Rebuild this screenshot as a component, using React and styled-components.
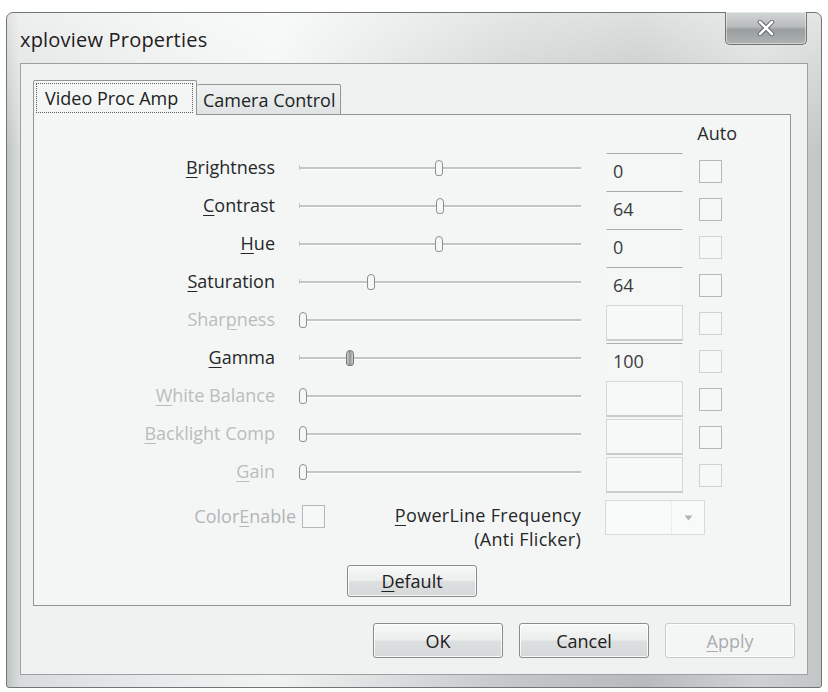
import React from 'react';
import styled, { createGlobalStyle } from 'styled-components';

const GlobalStyle = createGlobalStyle`
  html, body {
    margin: 0;
    padding: 0;
    background: #ffffff;
  }
  body {
    font-family: "Open Sans", "Noto Sans", sans-serif;
    color: #262828;
  }
`;

const Screen = styled.div`
  width: 828px;
  height: 692px;
  padding: 12px 6px 4px 6px;
  box-sizing: border-box;
`;

const Window = styled.div`
  width: 816px;
  height: 676px;
  box-sizing: border-box;
  border: 1px solid #707575;
  border-radius: 7px 7px 3px 3px;
  padding: 0 13px 12px 13px;
  display: flex;
  flex-direction: column;
  background:
    linear-gradient(to bottom, rgba(255, 255, 255, 0.55) 0, rgba(255, 255, 255, 0) 140px),
    linear-gradient(90deg, #bfc3c3 0, #d9dcdc 1.5%, #e9ecec 20%, #f1f3f3 33%, #c4c8c8 62%, #b7bbbb 78%, #cfd2d2 92%, #c2c6c6 100%);
`;

const TitleBar = styled.div`
  height: 50px;
  display: flex;
  align-items: flex-start;
  justify-content: space-between;
`;

const Title = styled.div`
  font-size: 20px;
  color: #1e2020;
  margin-top: 13px;
  letter-spacing: 0.2px;
`;

const CloseButton = styled.div`
  width: 82px;
  height: 33px;
  margin-top: -1px;
  margin-right: 1px;
  box-sizing: border-box;
  border: 1px solid #6f7575;
  border-top: none;
  border-radius: 0 0 5px 5px;
  background: linear-gradient(to bottom, #d3d6d6 0, #b9bdbd 45%, #999e9e 55%, #aeb2b2 100%);
  box-shadow: inset 0 0 0 1px rgba(255, 255, 255, 0.45);
  display: flex;
  align-items: center;
  justify-content: center;
`;

const Client = styled.div`
  flex: 1;
  background: #eef2f1;
  border: 1px solid #9ba1a1;
  padding: 16px 15px 0 12px;
  display: flex;
  flex-direction: column;
`;

const Tabs = styled.div`
  display: flex;
  align-items: flex-end;
  height: 35px;
  margin-bottom: -1px;
  position: relative;
  z-index: 1;
`;

const Tab = styled.div`
  box-sizing: border-box;
  height: ${p => (p.$active ? '35px' : '31px')};
  width: ${p => p.$width}px;
  border: 1px solid #8f9696;
  border-left: ${p => (p.$active ? '1px solid #8f9696' : 'none')};
  border-bottom: ${p => (p.$active ? 'none' : '1px solid #8f9696')};
  border-radius: 2px 2px 0 0;
  background: ${p => (p.$active ? '#f4f6f6' : 'linear-gradient(to bottom, #f0f2f2, #dfe3e3)')};
  font-size: 18px;
  color: #202222;
  white-space: nowrap;
  display: flex;
  align-items: ${p => (p.$active ? 'stretch' : 'center')};
  padding: ${p => (p.$active ? '2px 3px 2px 2px' : '0 0 0 6px')};
`;

const FocusRing = styled.div`
  flex: 1;
  border: 1px dotted #5b6060;
  display: flex;
  align-items: center;
  padding-left: 8px;
`;

const Panel = styled.div`
  box-sizing: border-box;
  width: 758px;
  height: 492px;
  border: 1px solid #8f9696;
  background: #f4f6f6;
  padding-top: 7px;
  display: flex;
  flex-direction: column;
`;

const AutoHeader = styled.div`
  height: 22px;
  margin-bottom: 7px;
  display: flex;
  justify-content: flex-end;
  padding-right: 53px;
  font-size: 18px;
  line-height: 22px;
  color: #2a2c2c;
`;

const Row = styled.div`
  height: 38px;
  display: flex;
  align-items: center;
`;

const Label = styled.div`
  width: 241px;
  text-align: right;
  font-size: 18px;
  line-height: 22px;
  padding-bottom: 6px;
  color: ${p => (p.$disabled ? '#b9bdbd' : '#262828')};
  white-space: nowrap;
`;

const Mn = styled.span`
  text-decoration: underline;
  text-underline-offset: 3px;
`;

const Track = styled.div`
  position: relative;
  width: 282px;
  height: 20px;
  margin-left: 24px;
  margin-bottom: 4px;

  &::before {
    content: '';
    position: absolute;
    left: 0;
    right: 0;
    top: 9px;
    height: 2px;
    background: #c2c6c6;
    border-bottom: 1px solid #ffffff;
  }

  &::after {
    content: '';
    position: absolute;
    left: 0;
    top: 7px;
    width: 1px;
    height: 5px;
    background: #c2c6c6;
  }
`;

const Thumb = styled.div`
  position: absolute;
  top: 2px;
  width: 8px;
  height: 16px;
  margin-left: -5px;
  box-sizing: border-box;
  border: 1px solid ${p => (p.$dark ? '#6f7474' : '#8b9090')};
  border-radius: 4px 4px 3px 3px;
  background: ${p => (p.$dark ? 'linear-gradient(90deg, #cfd2d2, #8e9393, #cfd2d2)' : '#f6f7f7')};
  z-index: 1;
`;

const ValueBox = styled.div`
  box-sizing: border-box;
  width: 77px;
  height: 36px;
  margin-left: 25px;
  margin-top: 2px;
  padding-left: 6px;
  display: flex;
  align-items: center;
  font-size: 18px;
  color: #3a3c3c;
  background: ${p => (p.$disabled ? '#f7f9f9' : '#f5f7f7')};
  border: 1px solid ${p => (p.$disabled ? '#d4d8d8' : 'transparent')};
  border-top: 1px solid ${p => (p.$disabled ? '#d4d8d8' : '#a8adad')};
  border-bottom: ${p => (p.$disabled ? '2px solid #c8cccc' : '1px solid transparent')};
`;

const Check = styled.div`
  box-sizing: border-box;
  width: 23px;
  height: 23px;
  margin-left: 16px;
  margin-top: 2px;
  border: 1px solid ${p => (p.$light ? '#cfd3d3' : '#b3b8b8')};
  background: #f6f8f8;
  flex-shrink: 0;
`;

const BottomRow = styled.div`
  display: flex;
  align-items: flex-start;
  margin-top: 12px;
`;

const ColorLabel = styled.div`
  width: 262px;
  text-align: right;
  font-size: 18px;
  line-height: 22px;
  color: #b1b5b5;
  white-space: nowrap;
`;

const SmallCheck = styled(Check)`
  margin-left: 6px;
  margin-top: 0;
`;

const PowerLabel = styled.div`
  width: 256px;
  text-align: right;
  font-size: 18px;
  line-height: 24px;
  margin-top: -2px;
  color: #262828;
  letter-spacing: 0.3px;
  white-space: nowrap;
`;

const Dropdown = styled.div`
  box-sizing: border-box;
  width: 100px;
  height: 35px;
  margin-left: 24px;
  margin-top: -5px;
  border: 1px solid #d6dada;
  background: #f8f9f9;
  display: flex;
  justify-content: flex-end;
`;

const DropArrow = styled.div`
  width: 32px;
  border-left: 1px solid #eceeee;
  display: flex;
  align-items: center;
  justify-content: center;
`;

const DefaultWrap = styled.div`
  display: flex;
  justify-content: center;
  margin-top: 14px;
`;

const Button = styled.div`
  box-sizing: border-box;
  width: ${p => p.$width || 130}px;
  height: ${p => p.$height || 35}px;
  border: 1px solid ${p => (p.$disabled ? '#c6caca' : '#878d8d')};
  border-radius: 3px;
  background: ${p => (p.$disabled
    ? '#f4f6f6'
    : 'linear-gradient(to bottom, #f7f8f8 0, #eceeee 48%, #dde0e0 52%, #d6d9d9 100%)')};
  box-shadow: inset 0 0 0 1px rgba(255, 255, 255, 0.8);
  display: flex;
  align-items: center;
  justify-content: center;
  font-size: 18px;
  color: ${p => (p.$disabled ? '#a9adad' : '#1e2020')};
`;

const ButtonRow = styled.div`
  display: flex;
  justify-content: flex-end;
  gap: 16px;
  margin-top: 17px;
  margin-right: -3px;
`;

const rows = [
  { text: 'Brightness', u: 0, value: '0', pos: 50 },
  { text: 'Contrast', u: 0, value: '64', pos: 50.4 },
  { text: 'Hue', u: 0, value: '0', pos: 50, light: true },
  { text: 'Saturation', u: 0, value: '64', pos: 26 },
  { text: 'Sharpness', u: 4, disabled: true, pos: 1.8, light: true },
  { text: 'Gamma', u: 0, value: '100', pos: 18.5, dark: true, light: true },
  { text: 'White Balance', u: 0, disabled: true, pos: 1.8 },
  { text: 'Backlight Comp', u: 0, disabled: true, pos: 1.8 },
  { text: 'Gain', u: 0, disabled: true, pos: 1.8, light: true },
];

const Mnemonic = ({ text, u }) => (
  <>
    {text.slice(0, u)}
    <Mn>{text[u]}</Mn>
    {text.slice(u + 1)}
  </>
);

const App = () => (
  <Screen>
    <GlobalStyle />
    <Window>
      <TitleBar>
        <Title>xploview Properties</Title>
        <CloseButton>
          <svg width="20" height="16" viewBox="0 0 20 16">
            <path d="M4 2 L16 14 M16 2 L4 14" stroke="#5d6262" strokeWidth="4.5" strokeLinecap="round" />
            <path d="M4 2 L16 14 M16 2 L4 14" stroke="#ffffff" strokeWidth="2.6" strokeLinecap="round" />
          </svg>
        </CloseButton>
      </TitleBar>
      <Client>
        <Tabs>
          <Tab $active $width={164}>
            <FocusRing>Video Proc Amp</FocusRing>
          </Tab>
          <Tab $width={144}>Camera Control</Tab>
        </Tabs>
        <Panel>
          <AutoHeader>Auto</AutoHeader>
          {rows.map(r => (
            <Row key={r.text}>
              <Label $disabled={r.disabled}>
                <Mnemonic text={r.text} u={r.u} />
              </Label>
              <Track>
                <Thumb $dark={r.dark} style={{ left: `${r.pos}%` }} />
              </Track>
              <ValueBox $disabled={r.disabled}>{r.value}</ValueBox>
              <Check $light={r.light} />
            </Row>
          ))}
          <BottomRow>
            <ColorLabel>
              Color<Mn>E</Mn>nable
            </ColorLabel>
            <SmallCheck />
            <PowerLabel>
              <Mn>P</Mn>owerLine Frequency
              <br />
              (Anti Flicker)
            </PowerLabel>
            <Dropdown>
              <DropArrow>
                <svg width="9" height="6" viewBox="0 0 9 6">
                  <path d="M0.5 0.5 L8.5 0.5 L4.5 5.5 Z" fill="#b0b4b4" />
                </svg>
              </DropArrow>
            </Dropdown>
          </BottomRow>
          <DefaultWrap>
            <Button $width={130} $height={32}>
              <span>
                <Mn>D</Mn>efault
              </span>
            </Button>
          </DefaultWrap>
        </Panel>
        <ButtonRow>
          <Button>OK</Button>
          <Button>Cancel</Button>
          <Button $disabled>
            <span>
              <Mn>A</Mn>pply
            </span>
          </Button>
        </ButtonRow>
      </Client>
    </Window>
  </Screen>
);

export default App;
